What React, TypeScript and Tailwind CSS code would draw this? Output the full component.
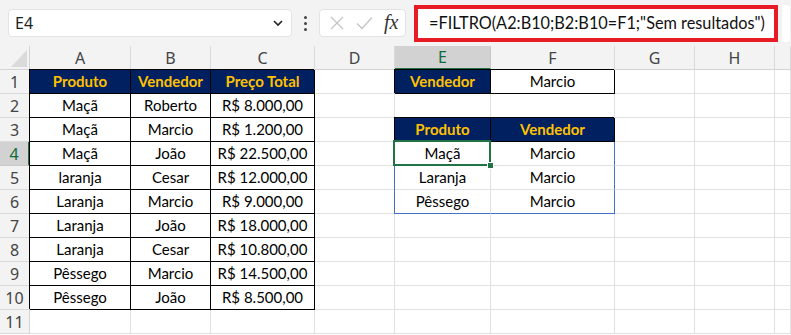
import React from "react";

type Kind = "hdr" | "val" | "empty";
interface CellDef {
  text?: string;
  kind: Kind;
  black?: boolean;
}

const cols = ["A", "B", "C", "D", "E", "F", "G", "H", ""];

const tableRows: [string, string, string][] = [
  ["Maçã", "Roberto", "R$ 8.000,00"],
  ["Maçã", "Marcio", "R$ 1.200,00"],
  ["Maçã", "João", "R$ 22.500,00"],
  ["laranja", "Cesar", "R$ 12.000,00"],
  ["Laranja", "Marcio", "R$ 9.000,00"],
  ["Laranja", "João", "R$ 18.000,00"],
  ["Laranja", "Cesar", "R$ 10.800,00"],
  ["Pêssego", "Marcio", "R$ 14.500,00"],
  ["Pêssego", "João", "R$ 8.500,00"],
];

const spill: [string, string][] = [
  ["Maçã", "Marcio"],
  ["Laranja", "Marcio"],
  ["Pêssego", "Marcio"],
];

function getCell(r: number, c: number): CellDef {
  if (r === 1) {
    if (c === 0) return { text: "Produto", kind: "hdr", black: true };
    if (c === 1) return { text: "Vendedor", kind: "hdr", black: true };
    if (c === 2) return { text: "Preço Total", kind: "hdr", black: true };
    if (c === 4) return { text: "Vendedor", kind: "hdr", black: true };
    if (c === 5) return { text: "Marcio", kind: "val", black: true };
  }
  if (r >= 2 && r <= 10 && c <= 2) {
    return { text: tableRows[r - 2][c], kind: "val", black: true };
  }
  if (r === 3) {
    if (c === 4) return { text: "Produto", kind: "hdr", black: true };
    if (c === 5) return { text: "Vendedor", kind: "hdr", black: true };
  }
  if (r >= 4 && r <= 6 && (c === 4 || c === 5)) {
    return { text: spill[r - 4][c - 4], kind: "val" };
  }
  return { kind: "empty" };
}

function Cell({ r, c }: { r: number; c: number }) {
  const d = getCell(r, c);
  const inSpill = r >= 4 && r <= 6 && (c === 4 || c === 5);
  const active = r === 4 && c === 4;
  let cls =
    "relative flex items-center justify-center border-r border-b whitespace-nowrap overflow-visible text-[15px] leading-none ";
  if (d.kind === "hdr") {
    cls += "bg-[#002060] text-[#ffc000] font-bold ";
  } else {
    cls += "bg-white text-black ";
  }
  if (d.black) {
    cls += "border-r-black border-b-black shadow-[-1px_-1px_0_0_#000] ";
  } else if (inSpill) {
    cls += c === 5 ? "border-r-[#4472c4] " : "border-r-[#e1e1e1] ";
    cls += r === 6 ? "border-b-[#4472c4] " : "border-b-[#e1e1e1] ";
    if (c === 4) cls += "shadow-[-1px_0_0_0_#4472c4] ";
  } else {
    cls += "border-r-[#e1e1e1] border-b-[#e1e1e1] ";
  }
  return (
    <div className={cls}>
      {d.text && <span className="relative top-[0px]">{d.text}</span>}
      {active && (
        <>
          <span className="absolute left-[-2px] top-[-2px] right-[-1px] bottom-[-1px] border-2 border-[#217346] z-10 pointer-events-none" />
          <span className="absolute right-[-4px] bottom-[-4px] w-[7px] h-[7px] bg-[#217346] border border-white z-20" />
        </>
      )}
    </div>
  );
}

function TopBar() {
  return (
    <div className="h-[46px] bg-[#f3f3f3] flex items-center">
      <div className="ml-[8px] w-[284px] h-[28px] bg-white rounded-[4px] border border-[#e3e3e3] flex items-center justify-between pl-[6px] pr-[7px]">
        <span className="text-[16px] text-[#222] font-['Noto_Sans',sans-serif]">E4</span>
        <svg width="12" height="8" viewBox="0 0 12 8">
          <path d="M2 2 L6 6 L10 2" fill="none" stroke="#222" strokeWidth="1.6" />
        </svg>
      </div>
      <div className="w-[27px] flex flex-col items-center gap-[3px]">
        <span className="w-[3px] h-[3px] bg-[#444] rounded-full" />
        <span className="w-[3px] h-[3px] bg-[#444] rounded-full" />
        <span className="w-[3px] h-[3px] bg-[#444] rounded-full" />
      </div>
      <div className="w-[87px] h-[28px] bg-white rounded-[4px] border border-[#e3e3e3] flex items-center pl-[9px] gap-[11px]">
        <svg width="16" height="16" viewBox="0 0 16 16">
          <path d="M2 2 L14 14 M14 2 L2 14" stroke="#c4c4c4" strokeWidth="1.3" fill="none" />
        </svg>
        <svg width="17" height="14" viewBox="0 0 17 14">
          <path d="M1 7.5 L6 12.5 L16 1.5" stroke="#c4c4c4" strokeWidth="1.3" fill="none" />
        </svg>
        <span className="italic text-[20px] leading-none text-[#333] font-['Liberation_Serif',serif] relative -top-[1px]">
          fx
        </span>
      </div>
      <div className="ml-[8px] w-[364px] h-[37px] bg-white border-4 border-[#e81c24] flex items-center pl-[11px]">
        <span className="text-[16.3px] text-[#111] font-['Lato',sans-serif] whitespace-nowrap">
          =FILTRO(A2:B10;B2:B10=F1;"Sem resultados")
        </span>
      </div>
      <div className="ml-[4px] w-[8px] h-[37px] bg-white rounded-r-[4px]" />
    </div>
  );
}

export default function App() {
  const rows = Array.from({ length: 11 }, (_, i) => i + 1);
  return (
    <div className="w-[791px] h-[335px] overflow-hidden bg-white font-['Lato',sans-serif]">
      <TopBar />
      <div className="grid grid-cols-[30px_101px_80px_104px_80px_96px_124px_80px_80px_16px] auto-rows-[24px]">
        <div className="relative bg-[#f3f3f3] border-r border-b border-r-[#d4d4d4] border-b-[#d4d4d4]">
          <svg className="absolute left-[11px] top-[4px]" width="16" height="17" viewBox="0 0 16 17">
            <path d="M16 0 L16 17 L0 17 Z" fill="#dadada" />
          </svg>
        </div>
        {cols.map((c, i) =>
          i === 4 ? (
            <div
              key={i}
              className="flex items-center justify-center bg-[#d2d2d2] border-r border-r-[#c8c8c8] border-b-2 border-b-[#217346] text-[16px] text-[#0e6b3a] font-['Noto_Sans',sans-serif] leading-none"
            >
              {c}
            </div>
          ) : (
            <div
              key={i}
              className="flex items-center justify-center bg-[#f3f3f3] border-r border-b border-r-[#dadada] border-b-[#d4d4d4] text-[16px] text-[#444] font-['Noto_Sans',sans-serif] leading-none"
            >
              {c}
            </div>
          )
        )}
        {rows.map((r) => (
          <React.Fragment key={r}>
            {r === 4 ? (
              <div className="flex items-center justify-center bg-[#d2d2d2] border-r-2 border-r-[#217346] border-b border-b-[#c8c8c8] text-[16px] text-[#0e6b3a] font-['Noto_Sans',sans-serif] leading-none">
                {r}
              </div>
            ) : (
              <div className="flex items-center justify-center bg-[#f3f3f3] border-r border-b border-r-[#d4d4d4] border-b-[#dadada] text-[16px] text-[#444] font-['Noto_Sans',sans-serif] leading-none">
                {r}
              </div>
            )}
            {cols.map((_, c) => (
              <Cell key={c} r={r} c={c} />
            ))}
          </React.Fragment>
        ))}
      </div>
    </div>
  );
}
